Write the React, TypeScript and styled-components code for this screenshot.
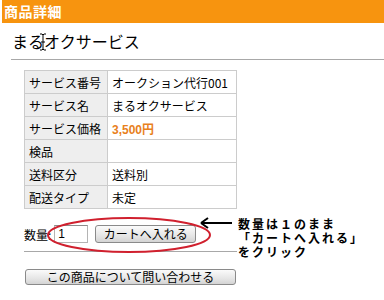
import React from 'react';
import styled, { createGlobalStyle } from 'styled-components';

const GlobalStyle = createGlobalStyle`
  html, body {
    margin: 0;
    padding: 0;
    background: #ffffff;
    width: 384px;
    height: 300px;
    overflow: hidden;
  }
  body {
    font-family: "Noto Sans CJK JP", "Liberation Sans", sans-serif;
    color: #000000;
  }
`;

const Page = styled.div`
  position: relative;
  width: 384px;
  height: 300px;
`;

const HeaderBar = styled.div`
  margin-left: 2px;
  height: 23px;
  background: #f7940f;
  color: #ffffff;
  font-size: 14px;
  font-weight: 700;
  line-height: 23px;
  padding-left: 2px;
  letter-spacing: 0.5px;
`;

const TitleBlock = styled.div`
  margin-left: 11px;
  height: 36px;
  border-bottom: 1px solid #a8a8a8;
  display: flex;
  align-items: center;
`;

const Title = styled.h1`
  margin: 0;
  padding-left: 1px;
  font-size: 16px;
  font-weight: 400;
  line-height: 20px;
`;

const Content = styled.div`
  padding: 10px 0 0 24px;
`;

const SpecTable = styled.table`
  border-collapse: collapse;
  width: 213px;
  font-size: 12px;
`;

const LabelCell = styled.th`
  width: 74px;
  height: 22px;
  padding: 0 4px;
  background: #eeeeee;
  border: 1px solid #cccccc;
  font-weight: 400;
  text-align: left;
  white-space: nowrap;
`;

const ValueCell = styled.td<{ $price?: boolean }>`
  height: 22px;
  padding: 0 4px;
  border: 1px solid #cccccc;
  white-space: nowrap;
  color: ${({ $price }) => ($price ? '#e8801c' : '#000000')};
  font-weight: ${({ $price }) => ($price ? 700 : 400)};
  font-family: ${({ $price }) =>
    $price ? '"Liberation Sans", "Noto Sans CJK JP", sans-serif' : 'inherit'};
`;

const QuantityRow = styled.div`
  margin-top: 13px;
  width: 213px;
  height: 24px;
  display: flex;
  align-items: center;
  font-size: 12px;
  border-bottom: 1px solid #a8a8a8;
  padding-bottom: 5px;
`;

const QuantityInput = styled.input`
  box-sizing: border-box;
  width: 34px;
  height: 18px;
  margin: 0 7px 0 3px;
  padding: 0 3px;
  border: 1px solid #b4b4b4;
  border-top-color: #8c8c8c;
  font-family: "Liberation Sans", sans-serif;
  font-size: 12px;
  background: #ffffff;
  outline: none;
`;

const GrayButton = styled.button<{ $wide?: boolean }>`
  box-sizing: border-box;
  width: ${({ $wide }) => ($wide ? '211px' : '101px')};
  height: ${({ $wide }) => ($wide ? '16px' : '18px')};
  padding: 0;
  border: 1px solid #8a8a8a;
  border-radius: 3px;
  background: linear-gradient(#fbfbfb, #e6e6e6 60%, #d4d4d4);
  font-family: "Noto Sans CJK JP", sans-serif;
  font-size: 12px;
  line-height: 14px;
  color: #000000;
`;

const InquiryWrap = styled.div`
  margin-top: 11px;
  padding-left: 1px;
`;

const Ellipse = styled.svg`
  position: absolute;
  left: 46px;
  top: 216px;
`;

const Arrow = styled.svg`
  position: absolute;
  left: 199px;
  top: 217px;
`;

const Note = styled.div`
  position: absolute;
  left: 238px;
  top: 217px;
  font-size: 12px;
  font-weight: 700;
  line-height: 14px;
  letter-spacing: 2px;
  white-space: nowrap;
`;

const Cursor = styled.svg`
  position: absolute;
  left: 39px;
  top: 33px;
`;

const specs: { label: string; value: string; price?: boolean }[] = [
  { label: 'サービス番号', value: 'オークション代行001' },
  { label: 'サービス名', value: 'まるオクサービス' },
  { label: 'サービス価格', value: '3,500円', price: true },
  { label: '検品', value: '' },
  { label: '送料区分', value: '送料別' },
  { label: '配送タイプ', value: '未定' },
];

export default function App() {
  return (
    <Page>
      <GlobalStyle />
      <HeaderBar>商品詳細</HeaderBar>
      <TitleBlock>
        <Title>まるオクサービス</Title>
      </TitleBlock>
      <Content>
        <SpecTable>
          <tbody>
            {specs.map((s) => (
              <tr key={s.label}>
                <LabelCell>{s.label}</LabelCell>
                <ValueCell $price={s.price}>{s.value}</ValueCell>
              </tr>
            ))}
          </tbody>
        </SpecTable>
        <QuantityRow>
          数量:
          <QuantityInput defaultValue="1" />
          <GrayButton>カートへ入れる</GrayButton>
        </QuantityRow>
        <InquiryWrap>
          <GrayButton $wide>この商品について問い合わせる</GrayButton>
        </InquiryWrap>
      </Content>

      <Cursor width="8" height="18" viewBox="0 0 8 18">
        <path d="M1 1h2l1 1 1-1h2M4 2v14M1 17h2l1-1 1 1h2M2 9h4" stroke="#000" strokeWidth="1" fill="none" />
      </Cursor>
      <Ellipse width="166" height="38" viewBox="0 0 166 38">
        <ellipse cx="83" cy="19" rx="81" ry="17" fill="none" stroke="#d0202e" strokeWidth="2" />
      </Ellipse>
      <Arrow width="34" height="12" viewBox="0 0 34 12">
        <path d="M2 6h31M2 6l7-5M2 6l7 5" stroke="#000" strokeWidth="2" fill="none" />
      </Arrow>
      <Note>
        数量は１のまま
        <br />
        「カートへ入れる」
        <br />
        をクリック
      </Note>
    </Page>
  );
}
